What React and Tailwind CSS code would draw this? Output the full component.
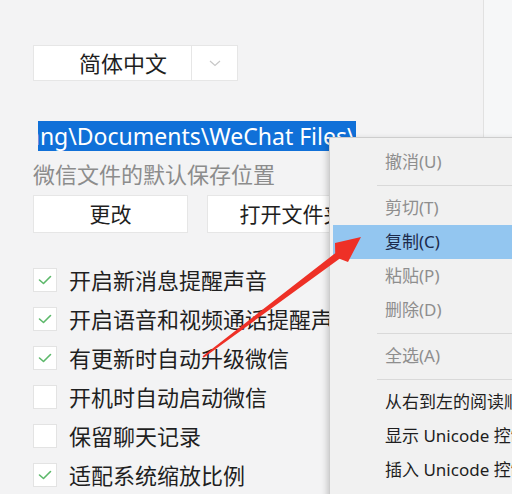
const options = [
  { label: "开启新消息提醒声音", checked: true },
  { label: "开启语音和视频通话提醒声音", checked: true },
  { label: "有更新时自动升级微信", checked: true },
  { label: "开机时自动启动微信", checked: false },
  { label: "保留聊天记录", checked: false },
  { label: "适配系统缩放比例", checked: true },
];

const menuItems = [
  { label: "撤消(U)", muted: true },
  { sep: true },
  { label: "剪切(T)", muted: true },
  { label: "复制(C)", active: true },
  { label: "粘贴(P)", muted: true },
  { label: "删除(D)", muted: true },
  { sep: true },
  { label: "全选(A)", muted: true },
  { sep: true },
  { label: "从右到左的阅读顺序(R)" },
  { label: "显示 Unicode 控制字符(S)" },
  { label: "插入 Unicode 控制字符(I)" },
];

function Check({ checked }) {
  return (
    <span className="flex h-[24px] w-[24px] shrink-0 items-center justify-center border border-[#e3e3e3] bg-white">
      {checked && (
        <svg width="14" height="10" viewBox="0 0 14 10" fill="none">
          <path d="M1.5 5 L5.5 8.5 L12.5 1.5" stroke="#5cb86a" strokeWidth="1.6" strokeLinecap="round" strokeLinejoin="round" />
        </svg>
      )}
    </span>
  );
}

function ContextMenu() {
  return (
    <div className="absolute left-[329px] top-[137px] w-[200px] h-[370px] border border-[#cdcdcd] bg-[#f1f1f1] pl-[3px] pt-[7px] shadow-[-2px_2px_6px_rgba(0,0,0,0.18)]">
      {menuItems.map((item, i) =>
        item.sep ? (
          <div key={i} className="flex h-[12px] items-center pl-[44px]">
            <div className="h-px w-full bg-[#d9d9d9]" />
          </div>
        ) : (
          <div
            key={i}
            className={
              "flex h-[34px] items-center whitespace-nowrap pl-[52px] text-[17px] " +
              (item.active ? "bg-[#93c6f0] text-[#1c2a4a]" : item.muted ? "text-[#8e8e8e]" : "text-[#1e1e1e]")
            }
          >
            {item.label}
          </div>
        )
      )}
    </div>
  );
}

export default function App() {
  return (
    <div className="relative flex h-[494px] w-[512px] overflow-hidden bg-[#f3f3f4] font-['Noto_Sans','Noto_Sans_CJK_SC',sans-serif] text-[#1f1f1f]">
      <div className="flex w-[484px] shrink-0 flex-col border-r border-[#e1e1e1] pl-[33px] pt-[45px]">
        <div className="flex h-[38px] w-[205px] border border-[#e6e6e6] bg-white">
          <div className="flex w-[157px] items-center pl-[45px] text-[22px] leading-none">简体中文</div>
          <div className="flex flex-1 items-center justify-center border-l border-[#e6e6e6]">
            <svg width="12" height="7" viewBox="0 0 12 7" fill="none">
              <path d="M1 1 L6 5.5 L11 1" stroke="#c8c8c8" strokeWidth="1.2" />
            </svg>
          </div>
        </div>

        <div className="ml-[5px] mt-[40px] flex h-[31px] w-[318px] items-center overflow-hidden bg-[#1070d8]">
          <span className="-ml-[11px] whitespace-nowrap text-[23px] leading-none text-white">ang\Documents\WeChat Files\</span>
        </div>

        <div className="mt-[11px] h-[24px] text-[22px] leading-[24px] text-[#8c8c8c]">微信文件的默认保存位置</div>

        <div className="mt-[9px] flex gap-[19px]">
          <div className="flex h-[38px] w-[155px] items-center justify-center border border-[#e6e6e6] bg-white text-[21px] leading-none">更改</div>
          <div className="flex h-[38px] w-[170px] items-center justify-center border border-[#e6e6e6] bg-white text-[21px] leading-none">打开文件夹</div>
        </div>

        <div className="mt-[27px] flex flex-col">
          {options.map((o) => (
            <div key={o.label} className="flex h-[39px] items-center gap-[12px] whitespace-nowrap">
              <Check checked={o.checked} />
              <span className="text-[22px] leading-none">{o.label}</span>
            </div>
          ))}
        </div>
      </div>
      <div className="flex-1 bg-[#f6f7f8]" />

      <ContextMenu />

      <svg className="absolute left-0 top-0" width="512" height="494" viewBox="0 0 512 494">
        <polygon
          points="203.6,357.8 339.5,258.8 348,262 361,237 335,243 335.2,253.2 202.6,356.2"
          fill="#ee3026"
        />
      </svg>
    </div>
  );
}
